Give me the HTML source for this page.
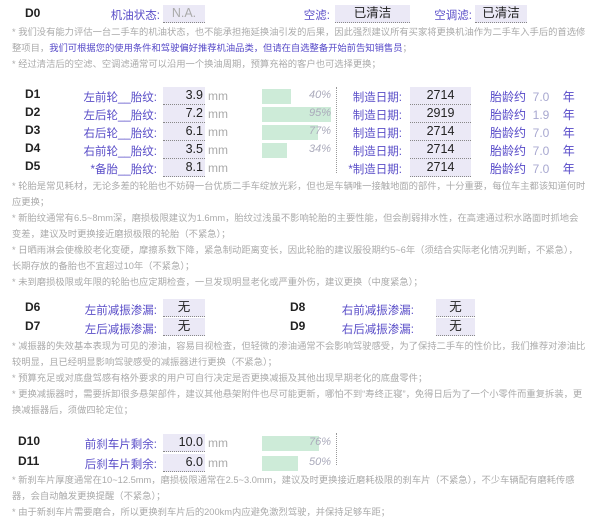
<!DOCTYPE html>
<html><head><meta charset="utf-8"><style>
body{margin:0;width:600px;height:523px;background:#fff;position:relative;overflow:hidden;font-family:"Liberation Sans","Noto Sans CJK SC",sans-serif;}
.a{position:absolute;white-space:nowrap;}
.d{font-weight:bold;font-size:12px;color:#222;}
.l{font-size:11.5px;color:#5a4ec8;text-align:right;}
.b{background:#ebe9f6;border-bottom:1px dotted #888;height:17px;line-height:17px;font-size:12.5px;color:#222;}
.n{font-size:9.3px;color:#aaa;line-height:16px;width:575px;white-space:normal;}
.n span{color:#5548c8;}
.mm{font-size:12px;color:#aaa;}
.bar{background:#cdebd8;height:15px;}
.p{font-size:11px;font-style:italic;color:#aab;text-align:right;width:40px;}
.vl{border-left:1px dotted #999;width:0;}
.y{font-size:12px;color:#5548c8;}
.g{font-size:12px;color:#a8a8d0;}
</style></head><body>
<div class="a d" style="left:25px;top:6px">D0</div>
<div class="a l" style="left:100px;top:7px;width:60px">机油状态:</div>
<div class="a b" style="left:163px;top:5px;width:42px;text-align:center;color:#aaa">N.A.</div>
<div class="a l" style="left:290px;top:7px;width:40px">空滤:</div>
<div class="a b" style="left:335px;top:5px;width:75px;text-align:center">已清洁</div>
<div class="a l" style="left:420px;top:7px;width:52px">空调滤:</div>
<div class="a b" style="left:475px;top:5px;width:52px;text-align:center">已清洁</div>
<div class="a n" style="left:12px;top:24px">* 我们没有能力评估一台二手车的机油状态，也不能承担拖延换油引发的后果，因此强烈建议所有买家将更换机油作为二手车入手后的首选修整项目，<span>我们可根据您的使用条件和驾驶偏好推荐机油品类，但请在自选整备开始前告知销售员</span>；<br>* 经过清洁后的空滤、空调滤通常可以沿用一个换油周期，预算充裕的客户也可选择更换；</div>

<div class="a vl" style="left:336px;top:87px;height:86px"></div>
<div class="a d" style="left:25px;top:87px">D1</div><div class="a d" style="left:25px;top:105px">D2</div><div class="a d" style="left:25px;top:123px">D3</div><div class="a d" style="left:25px;top:141px">D4</div><div class="a d" style="left:25px;top:159px">D5</div>
<div class="a l" style="left:60px;top:89px;width:97px">左前轮__胎纹:</div>
<div class="a l" style="left:60px;top:107px;width:97px">左后轮__胎纹:</div>
<div class="a l" style="left:60px;top:125px;width:97px">右后轮__胎纹:</div>
<div class="a l" style="left:60px;top:143px;width:97px">右前轮__胎纹:</div>
<div class="a l" style="left:60px;top:161px;width:97px">*备胎__胎纹:</div>
<div class="a b" style="left:163px;top:87px;width:40px;text-align:right;padding-right:2px">3.9</div>
<div class="a b" style="left:163px;top:105px;width:40px;text-align:right;padding-right:2px">7.2</div>
<div class="a b" style="left:163px;top:123px;width:40px;text-align:right;padding-right:2px">6.1</div>
<div class="a b" style="left:163px;top:141px;width:40px;text-align:right;padding-right:2px">3.5</div>
<div class="a b" style="left:163px;top:159px;width:40px;text-align:right;padding-right:2px">8.1</div>
<div class="a mm" style="left:208px;top:89px">mm</div><div class="a mm" style="left:208px;top:107px">mm</div><div class="a mm" style="left:208px;top:125px">mm</div><div class="a mm" style="left:208px;top:143px">mm</div><div class="a mm" style="left:208px;top:161px">mm</div>
<div class="a bar" style="left:262px;top:89px;width:29px"></div>
<div class="a bar" style="left:262px;top:107px;width:69px"></div>
<div class="a bar" style="left:262px;top:125px;width:56px"></div>
<div class="a bar" style="left:262px;top:143px;width:25px"></div>
<div class="a p" style="left:291px;top:89px">40%</div><div class="a p" style="left:291px;top:107px">95%</div><div class="a p" style="left:291px;top:125px">77%</div><div class="a p" style="left:291px;top:143px">34%</div>
<div class="a l" style="left:340px;top:89px;width:62px">制造日期:</div>
<div class="a l" style="left:340px;top:107px;width:62px">制造日期:</div>
<div class="a l" style="left:340px;top:125px;width:62px">制造日期:</div>
<div class="a l" style="left:340px;top:143px;width:62px">制造日期:</div>
<div class="a l" style="left:340px;top:161px;width:62px">*制造日期:</div>
<div class="a b" style="left:410px;top:87px;width:61px;text-align:center">2714</div>
<div class="a b" style="left:410px;top:105px;width:61px;text-align:center">2919</div>
<div class="a b" style="left:410px;top:123px;width:61px;text-align:center">2714</div>
<div class="a b" style="left:410px;top:141px;width:61px;text-align:center">2714</div>
<div class="a b" style="left:410px;top:159px;width:61px;text-align:center">2714</div>
<div class="a y" style="left:490px;top:88px">胎龄约 <span class="g">&nbsp;7.0</span>&nbsp;&nbsp;&nbsp;&nbsp;年</div>
<div class="a y" style="left:490px;top:106px">胎龄约 <span class="g">&nbsp;1.9</span>&nbsp;&nbsp;&nbsp;&nbsp;年</div>
<div class="a y" style="left:490px;top:124px">胎龄约 <span class="g">&nbsp;7.0</span>&nbsp;&nbsp;&nbsp;&nbsp;年</div>
<div class="a y" style="left:490px;top:142px">胎龄约 <span class="g">&nbsp;7.0</span>&nbsp;&nbsp;&nbsp;&nbsp;年</div>
<div class="a y" style="left:490px;top:160px">胎龄约 <span class="g">&nbsp;7.0</span>&nbsp;&nbsp;&nbsp;&nbsp;年</div>
<div class="a n" style="left:12px;top:178px">* 轮胎是常见耗材，无论多差的轮胎也不妨碍一台优质二手车绽放光彩，但也是车辆唯一接触地面的部件，十分重要，每位车主都该知道何时应更换；<br>* 新胎纹通常有6.5~8mm深，磨损极限建议为1.6mm，胎纹过浅虽不影响轮胎的主要性能，但会削弱排水性，在高速通过积水路面时抓地会变差，建议及时更换接近磨损极限的轮胎（不紧急）；<br>* 日晒雨淋会使橡胶老化变硬，摩擦系数下降，紧急制动距离变长，因此轮胎的建议服役期约5~6年（须结合实际老化情况判断，不紧急），长期存放的备胎也不宜超过10年（不紧急）；<br>* 未到磨损极限或年限的轮胎也应定期检查，一旦发现明显老化或严重外伤，建议更换（中度紧急）；</div>

<div class="a d" style="left:25px;top:300px">D6</div><div class="a d" style="left:25px;top:319px">D7</div>
<div class="a l" style="left:60px;top:302px;width:97px">左前减振渗漏:</div>
<div class="a l" style="left:60px;top:321px;width:97px">左后减振渗漏:</div>
<div class="a b" style="left:163px;top:299px;width:42px;text-align:center">无</div>
<div class="a b" style="left:163px;top:318px;width:42px;text-align:center">无</div>
<div class="a d" style="left:290px;top:300px">D8</div><div class="a d" style="left:290px;top:319px">D9</div>
<div class="a l" style="left:330px;top:302px;width:84px">右前减振渗漏:</div>
<div class="a l" style="left:330px;top:321px;width:84px">右后减振渗漏:</div>
<div class="a b" style="left:436px;top:299px;width:39px;text-align:center">无</div>
<div class="a b" style="left:436px;top:318px;width:39px;text-align:center">无</div>
<div class="a n" style="left:12px;top:338px">* 减振器的失效基本表现为可见的渗油，容易目视检查，但轻微的渗油通常不会影响驾驶感受，为了保持二手车的性价比，我们推荐对渗油比较明显，且已经明显影响驾驶感受的减振器进行更换（不紧急）；<br>* 预算充足或对底盘驾感有格外要求的用户可自行决定是否更换减振及其他出现早期老化的底盘零件；<br>* 更换减振器时，需要拆卸很多悬架部件，建议其他悬架附件也尽可能更新，哪怕不到“寿终正寝”，免得日后为了一个小零件而重复拆装，更换减振器后，须做四轮定位；</div>

<div class="a vl" style="left:336px;top:433px;height:32px"></div>
<div class="a d" style="left:18px;top:434px">D10</div><div class="a d" style="left:18px;top:454px">D11</div>
<div class="a l" style="left:60px;top:436px;width:97px">前刹车片剩余:</div>
<div class="a l" style="left:60px;top:456px;width:97px">后刹车片剩余:</div>
<div class="a b" style="left:163px;top:434px;width:40px;text-align:right;padding-right:2px">10.0</div>
<div class="a b" style="left:163px;top:454px;width:40px;text-align:right;padding-right:2px">6.0</div>
<div class="a mm" style="left:208px;top:436px">mm</div><div class="a mm" style="left:208px;top:456px">mm</div>
<div class="a bar" style="left:262px;top:436px;width:57px"></div>
<div class="a bar" style="left:262px;top:456px;width:36px"></div>
<div class="a p" style="left:291px;top:436px">76%</div><div class="a p" style="left:291px;top:456px">50%</div>
<div class="a n" style="left:12px;top:472px">* 新刹车片厚度通常在10~12.5mm，磨损极限通常在2.5~3.0mm，建议及时更换接近磨耗极限的刹车片（不紧急），不少车辆配有磨耗传感器，会自动触发更换提醒（不紧急）；<br>* 由于新刹车片需要磨合，所以更换刹车片后的200km内应避免激烈驾驶，并保持足够车距；</div>
</body></html>
